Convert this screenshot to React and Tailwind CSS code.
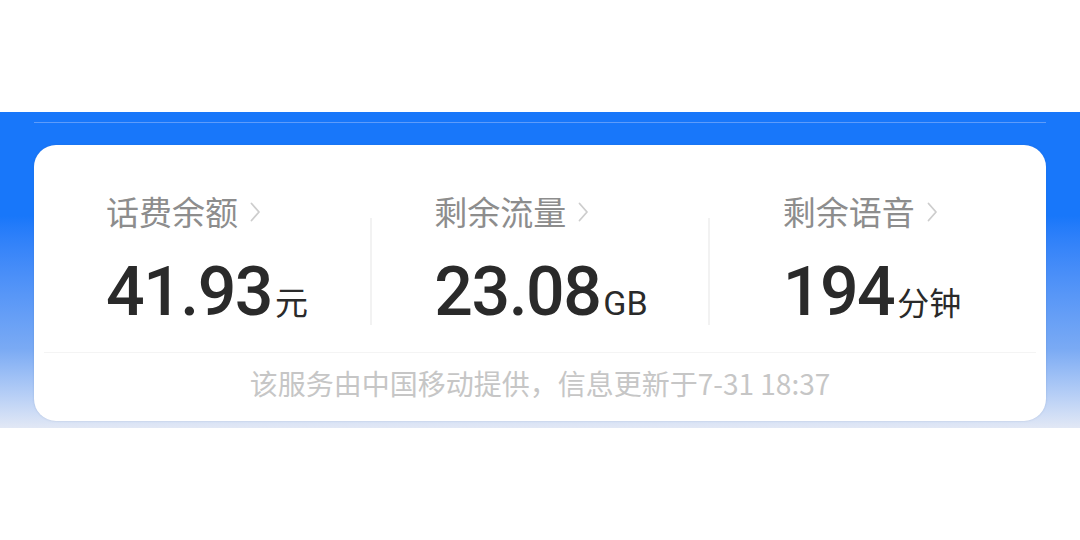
import React from 'react';

const cjk = '"Noto Sans CJK SC", "Noto Sans", sans-serif';
const num = 'Roboto, "Noto Sans CJK SC", sans-serif';

const stats = [
  { label: '话费余额', value: '41.93', unit: '元', unitCls: 'text-[33px]', shift: 'translate-x-[5px]' },
  { label: '剩余流量', value: '23.08', unit: 'GB', unitCls: 'text-[34px]', latin: true, shift: 'translate-x-[1px]' },
  { label: '剩余语音', value: '194', unit: '分钟', unitCls: 'text-[32px]', shift: '-translate-x-[6px]' },
];

function Chevron() {
  return (
    <svg width="14" height="24" viewBox="0 0 14 24" className="ml-[10px] mt-[2px]">
      <path d="M3.5 3.5 L11 12 L3.5 20.5" fill="none" stroke="#cdcdcd" strokeWidth="1.8" strokeLinecap="round" strokeLinejoin="round" />
    </svg>
  );
}

function Stat({ item }) {
  return (
    <div className="flex-1 flex justify-center">
      <div className={`flex flex-col items-start ${item.shift}`}>
        <div className="flex items-center h-[40px]">
          <span className="text-[33px] text-[#8d8d8d] leading-none" style={{ fontFamily: cjk }}>{item.label}</span>
          <Chevron />
        </div>
        <div className="flex items-baseline mt-[27px] h-[66px]">
          <span className="text-[68px] font-medium leading-none text-[#2a2a2a] tracking-[-1.5px]" style={{ fontFamily: num }}>{item.value}</span>
          <span
            className={`${item.unitCls} leading-none text-[#2a2a2a] ml-[3px]`}
            style={{ fontFamily: item.latin ? num : cjk }}
          >
            {item.unit}
          </span>
        </div>
      </div>
    </div>
  );
}

export default function App() {
  return (
    <div className="w-[1080px] h-[540px] bg-white overflow-hidden">
      <div className="h-[112px]" />
      <div className="h-[316px] bg-linear-to-b from-[#1877fa] from-33% via-[#7aaaf4] via-75% to-[#e2e8f5] px-[34px] pt-[10px]">
        <div className="h-[1px] bg-[#5d9cfb]" />
        <div className="mt-[22px] h-[276px] bg-white rounded-[22px] shadow-[0_0_2px_rgba(60,90,150,0.25)] flex flex-col">
          <div className="flex h-[207px] pt-[46px]">
            {stats.map((s, i) => (
              <React.Fragment key={s.label}>
                {i > 0 && <div className="w-[2px] bg-[#f2f2f2] mt-[27px] h-[107px]" />}
                <Stat item={s} />
              </React.Fragment>
            ))}
          </div>
          <div className="h-[1px] bg-[#f4f4f4] mx-[10px]" />
          <div
            className="flex-1 flex items-center justify-center text-[28px] text-[#c6c6c6] pb-[8px]"
            style={{ fontFamily: cjk }}
          >
            该服务由中国移动提供，信息更新于7-31 18:37
          </div>
        </div>
      </div>
    </div>
  );
}
